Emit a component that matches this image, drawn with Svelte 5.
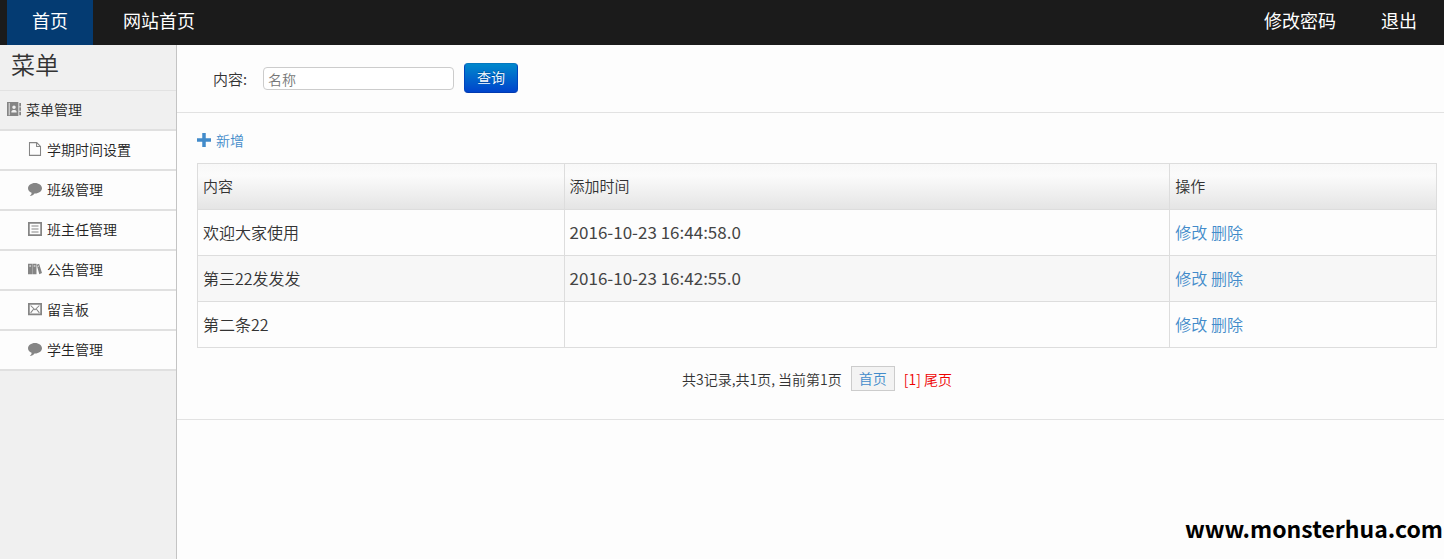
<script lang="ts">
  type MenuItem = { icon: string; label: string };
  type Row = { name: string; time: string };

  let keyword = $state('');

  const menu: MenuItem[] = [
    { icon: 'file', label: '学期时间设置' },
    { icon: 'comment', label: '班级管理' },
    { icon: 'list', label: '班主任管理' },
    { icon: 'books', label: '公告管理' },
    { icon: 'mail', label: '留言板' },
    { icon: 'comment', label: '学生管理' }
  ];

  const rows: Row[] = [
    { name: '欢迎大家使用', time: '2016-10-23 16:44:58.0' },
    { name: '第三22发发发', time: '2016-10-23 16:42:55.0' },
    { name: '第二条22', time: '' }
  ];
</script>

{#snippet icon(name: string)}
  <svg class="icon" viewBox="0 0 16 16" aria-hidden="true">
    {#if name === 'contact'}
      <path fill-rule="evenodd" d="M0 0h13v16H0zM2 1v14h1V1zM8 4a2 2 0 1 0 0 4 2 2 0 0 0 0-4zM5 12h6v-1c0-1.300-1.200-2-3-2s-3 .7-3 2z" />
      <path d="M14 1h2v4h-2zM14 6h2v4h-2zM14 11h2v4h-2z" />
    {:else if name === 'file'}
      <path class="line" d="M1.700.7h8.300l4.300 4.300v10.300H1.700z M9.800 1v4.200H14" />
    {:else if name === 'comment'}
      <path d="M8 1C3.600 1 0 3.700 0 7c0 2.400 1.700 4.300 4.100 5.300C4.200 13.700 3.300 15 2 16c2.600-.2 4.400-1.300 5.400-3H8c4.400 0 8-2.700 8-6s-3.600-6-8-6z" />
    {:else if name === 'list'}
      <path class="line wide" d="M1 1h14v14H1z" />
      <path class="line" d="M4 4.500h8M4 8h8M4 11.500h8" />
    {:else if name === 'books'}
      <path fill-rule="evenodd" d="M0 2h5v12H0zm1.500 2v1h2V4zM5.300 2h4.400v12H5.300zm1.200 2v1h2V4zM9.900 3.200l2.800-1.200L16 12.700 12.900 14zM10.900 4.500l.4 1 1.200-.5-.3-1z" />
    {:else if name === 'mail'}
      <path class="line wide" d="M1 2h14v12H1z" />
      <path class="line" d="M3 4l5 5 5-5M3 12.500L6.500 8M13 12.500L9.500 8" />
    {:else if name === 'plus'}
      <path d="M6 0h4v6h6v4h-6v6H6v-6H0V6h6z" />
    {/if}
  </svg>
{/snippet}

<div class="page">
  <header class="topbar">
    <nav>
      <a href="#home" class="active">首页</a>
      <a href="#site">网站首页</a>
    </nav>
    <nav class="account">
      <a href="#password">修改密码</a>
      <a href="#logout">退出</a>
    </nav>
  </header>

  <div class="body">
    <aside>
      <h1>菜单</h1>
      <a href="#menu" class="group">{@render icon('contact')}菜单管理</a>
      <ul>
        {#each menu as item}
          <li><a href="#menu">{@render icon(item.icon)}{item.label}</a></li>
        {/each}
      </ul>
    </aside>

    <main>
      <form class="search" onsubmit={(e) => e.preventDefault()}>
        <label for="keyword">内容:</label>
        <input id="keyword" type="text" placeholder="名称" bind:value={keyword} />
        <button type="submit">查询</button>
      </form>

      <section>
        <a href="#add" class="add">{@render icon('plus')}新增</a>
        <table>
          <thead>
            <tr>
              <th class="name">内容</th>
              <th class="time">添加时间</th>
              <th>操作</th>
            </tr>
          </thead>
          <tbody>
            {#each rows as row}
              <tr>
                <td>{row.name}</td>
                <td class="time">{row.time}</td>
                <td><a href="#edit">修改</a> <a href="#delete">删除</a></td>
              </tr>
            {/each}
          </tbody>
        </table>
        <div class="pager">
          <span>共3记录,共1页, 当前第1页</span>
          <a href="#first">首页</a>
          <span class="current">[1] 尾页</span>
        </div>
      </section>

      <footer>www.monsterhua.com</footer>
    </main>
  </div>
</div>

<style>
  :global(body) {
    margin: 0;
    background: #fdfdfd;
  }
  .page {
    display: flex;
    flex-direction: column;
    min-height: 100vh;
    color: #333;
    font: 350 14px/20px "Noto Sans CJK SC", sans-serif;
  }
  a {
    color: #428bca;
    text-decoration: none;
  }
  .icon {
    width: 14px;
    height: 14px;
    flex: none;
    fill: currentColor;
  }
  .line {
    fill: none;
    stroke: currentColor;
    stroke-width: 1.2;
  }
  .wide {
    stroke-width: 2;
  }

  .topbar {
    display: flex;
    justify-content: space-between;
    height: 45px;
    padding: 0 5px 0 7px;
    background: #1b1b1b;
  }
  .topbar nav {
    display: flex;
    gap: 5px;
  }
  .topbar .account {
    gap: 1px;
  }
  .topbar a {
    padding: 0 25px;
    color: #fff;
    font-size: 18px;
    font-weight: 400;
    line-height: 40px;
  }
  .topbar .account a {
    padding: 0 22px;
  }
  .topbar .active {
    background: #043b72;
  }

  .body {
    display: flex;
    flex: 1;
  }
  aside {
    flex: none;
    width: 176px;
    border-right: 1px solid #c4c4c4;
    background: #f0f0f0;
  }
  h1 {
    margin: 0;
    padding: 0 0 7px 11px;
    border-bottom: 1px solid #e2e2e2;
    font-size: 24px;
    font-weight: 350;
    line-height: 38px;
  }
  aside a {
    display: flex;
    align-items: center;
    gap: 5px;
    height: 36px;
    padding: 0 0 2px 28px;
    border-bottom: 2px solid #e0e0e0;
    color: #222;
  }
  aside .group {
    padding-left: 7px;
  }
  aside .icon {
    color: #858585;
  }
  ul {
    margin: 0;
    padding: 0;
    list-style: none;
    background: #fdfdfd;
  }

  main {
    display: flex;
    flex: 1;
    flex-direction: column;
  }
  .search {
    display: flex;
    align-items: center;
    height: 67px;
    padding-left: 36px;
    border-bottom: 1px solid #e2e2e2;
  }
  .search label {
    width: 50px;
    font-size: 15px;
  }
  input {
    box-sizing: border-box;
    width: 191px;
    height: 23px;
    margin: 0 10px 0 0;
    padding: 0 4px;
    border: 1px solid #ccc;
    border-radius: 4px;
    background: #fff;
    color: #555;
    font: inherit;
  }
  input::placeholder {
    color: #777;
    opacity: 1;
  }
  button {
    height: 30px;
    margin-bottom: 1px;
    padding: 0 12px 2px;
    border: 1px solid #04b;
    border-color: #0477c0 #04b #0039b0;
    border-radius: 4px;
    background: linear-gradient(#08c, #04c);
    color: #fff;
    font: inherit;
    text-shadow: 0 -1px 0 rgba(0, 0, 0, 0.25);
  }

  section {
    padding: 17px 7px 28px 20px;
    border-bottom: 1px solid #e2e2e2;
  }
  .add {
    display: flex;
    align-items: center;
    gap: 5px;
    margin-bottom: 13px;
  }
  table {
    width: 100%;
    border-collapse: collapse;
    table-layout: fixed;
    font-size: 16px;
  }
  th,
  td {
    height: 43px;
    padding: 0 5px 2px;
    border: 1px solid #ddd;
    text-align: left;
  }
  th {
    font-size: 15px;
    font-weight: 350;
  }
  th.name {
    width: 28.7%;
  }
  th.time {
    width: 48%;
  }
  td.time {
    font-size: 17px;
    font-weight: 400;
    color: #444;
  }
  thead {
    background: linear-gradient(#f8f8f8, #fbfbfb 25%, #e4e4e4);
  }
  tbody tr:nth-child(even) {
    background: #f7f7f7;
  }

  .pager {
    display: flex;
    align-items: center;
    justify-content: center;
    gap: 9px;
    margin-top: 18px;
  }
  .pager a {
    padding: 1px 7px 2px;
    border: 1px solid #ccc;
    background: #f3f3f3;
  }
  .pager .current {
    color: #e00;
  }

  footer {
    margin-top: auto;
    padding: 0 1px 16px;
    color: #000;
    font-size: 23px;
    font-weight: 700;
    line-height: 30px;
    text-align: right;
  }
</style>
